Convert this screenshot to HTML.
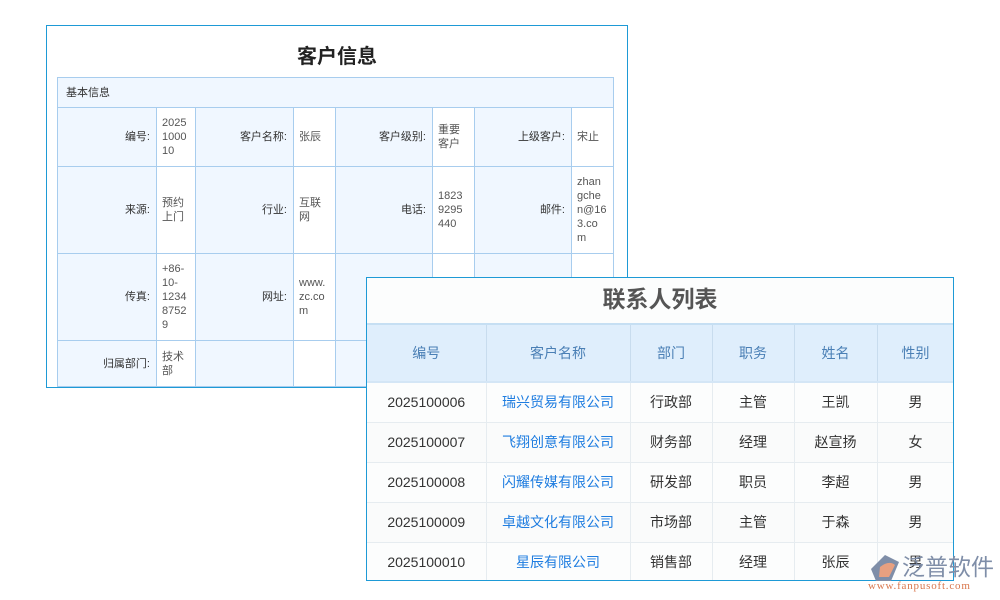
<!DOCTYPE html>
<html><head><meta charset="utf-8"><style>
*{margin:0;padding:0;box-sizing:border-box}
body{width:1000px;height:600px;background:#fff;position:relative;overflow:hidden;font-family:"Liberation Sans","Noto Sans CJK SC",sans-serif}
#back{position:absolute;left:46px;top:25px;width:582px;height:363px;border:1px solid #1e9ad6;background:#fff;overflow:hidden}
#back h1{position:absolute;left:0;right:0;top:14px;text-align:center;font-size:20px;font-weight:bold;color:#222}
#bt{position:absolute;left:10px;top:51px;border-collapse:collapse;table-layout:fixed;font-size:11px;color:#444}
#bt td{border:1px solid #a8cdee;vertical-align:middle;line-height:14px}
#bt .l{background:#f0f7ff;text-align:right;padding-right:6px;color:#333}
#bt .v{background:#fff;padding-left:5px;color:#555;word-break:break-all}
#bt .h{background:#f0f7ff;padding-left:8px;color:#333;height:30px}
#front{position:absolute;left:366px;top:277px;width:588px;height:304px;border:1px solid #1e9ad6;background:#fcfdfd;overflow:hidden}
#front h2{height:47px;line-height:42px;text-align:center;font-size:23px;font-weight:bold;color:#555;border-bottom:2px solid #c6dff3}
#ft{border-collapse:collapse;table-layout:fixed;width:587px;font-size:14px;color:#333;text-align:center}
#ft th{background:#dfeefc;color:#4a7fb5;font-weight:normal;height:57px;border-right:1px solid #c8dcee;border-bottom:2px solid #d4e6f6}
#ft td{height:40px;border-right:1px solid #e6ecf0;border-bottom:1px solid #e6ecf0}
#ft td.a{color:#1f7de0}
#ft tr:nth-child(odd) td{background:#fafbfb}
#logo{position:absolute;left:870px;top:553px}
</style></head><body>
<div id="back"><h1>客户信息</h1>
<table id="bt">
<colgroup><col style="width:99px"><col style="width:39px"><col style="width:98px"><col style="width:42px"><col style="width:97px"><col style="width:42px"><col style="width:97px"><col style="width:42px"></colgroup>
<tr><td class="h" colspan="8">基本信息</td></tr>
<tr style="height:59px"><td class="l">编号:</td><td class="v">2025<br>1000<br>10</td><td class="l">客户名称:</td><td class="v">张辰</td><td class="l">客户级别:</td><td class="v">重要<br>客户</td><td class="l">上级客户:</td><td class="v">宋止</td></tr>
<tr style="height:87px"><td class="l">来源:</td><td class="v">预约<br>上门</td><td class="l">行业:</td><td class="v">互联<br>网</td><td class="l">电话:</td><td class="v">1823<br>9295<br>440</td><td class="l">邮件:</td><td class="v">zhan<br>gche<br>n@16<br>3.co<br>m</td></tr>
<tr style="height:87px"><td class="l">传真:</td><td class="v">+86-<br>10-<br>1234<br>8752<br>9</td><td class="l">网址:</td><td class="v">www.<br>zc.co<br>m</td><td class="l"></td><td class="v"></td><td class="l"></td><td class="v"></td></tr>
<tr style="height:46px"><td class="l">归属部门:</td><td class="v">技术<br>部</td><td class="l"></td><td class="v"></td><td class="l"></td><td class="v"></td><td class="l"></td><td class="v"></td></tr>
</table></div>
<div id="front"><h2>联系人列表</h2>
<table id="ft">
<colgroup><col style="width:119px"><col style="width:144px"><col style="width:82px"><col style="width:82px"><col style="width:83px"><col style="width:77px"></colgroup>
<tr><th>编号</th><th>客户名称</th><th>部门</th><th>职务</th><th>姓名</th><th>性别</th></tr>
<tr><td>2025100006</td><td class="a">瑞兴贸易有限公司</td><td>行政部</td><td>主管</td><td>王凯</td><td>男</td></tr>
<tr><td>2025100007</td><td class="a">飞翔创意有限公司</td><td>财务部</td><td>经理</td><td>赵宣扬</td><td>女</td></tr>
<tr><td>2025100008</td><td class="a">闪耀传媒有限公司</td><td>研发部</td><td>职员</td><td>李超</td><td>男</td></tr>
<tr><td>2025100009</td><td class="a">卓越文化有限公司</td><td>市场部</td><td>主管</td><td>于森</td><td>男</td></tr>
<tr><td>2025100010</td><td class="a">星辰有限公司</td><td>销售部</td><td>经理</td><td>张辰</td><td>男</td></tr>
</table></div>
<div id="logo">
<svg width="30" height="28" style="position:absolute;left:0;top:1px"><path d="M15 1 L29 8 L21 27 L6 27 L1 15 Z" fill="#7f8ea8"/><path d="M10 13 Q19 6 25 11 L19 23 L9 23 Z" fill="#e8a080"/></svg>
<div style="position:absolute;left:32px;top:-1px;font-size:23px;color:#7f8ea8;white-space:nowrap;font-family:'Noto Sans CJK SC',sans-serif;line-height:26px">泛普软件</div>
<div style="position:absolute;left:-2px;top:27px;font-size:11px;color:#d9774d;font-family:'Liberation Serif',serif;white-space:nowrap;letter-spacing:0.8px">www.fanpusoft.com</div>
</div>
</body></html>
